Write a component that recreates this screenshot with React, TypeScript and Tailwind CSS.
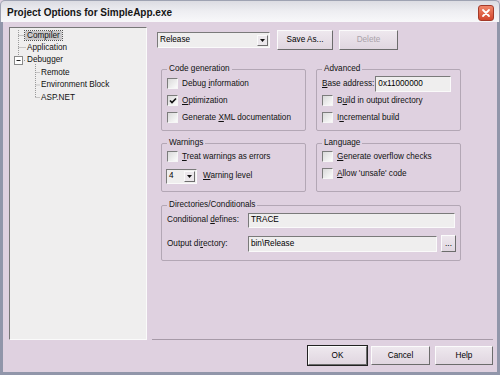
import React from "react";

const Check = ({ checked }: { checked?: boolean }) => (
  <div className="w-[11px] h-[11px] shrink-0 border border-t-[#7c7c7c] border-l-[#7c7c7c] border-r-[#f6f6f6] border-b-[#f6f6f6] bg-linear-to-br from-[#dadada] to-[#fbfbfb] flex items-center justify-center">
    {checked && (
      <svg width="8" height="8" viewBox="0 0 8 8">
        <path d="M1 3.5 L3 5.5 L7 1.5" stroke="#111" strokeWidth="1.6" fill="none" />
      </svg>
    )}
  </div>
);

const CheckRow = ({ checked, children }: { checked?: boolean; children: React.ReactNode }) => (
  <div className="flex items-center h-[17px]">
    <Check checked={checked} />
    <span className="ml-[4px] leading-[10px]">{children}</span>
  </div>
);

const Field = ({ w, h, children }: { w: string; h: string; children?: React.ReactNode }) => (
  <div
    className={`${w} ${h} shrink-0 border border-t-[#7a7a7a] border-l-[#7a7a7a] border-r-[#fafafa] border-b-[#fafafa] bg-[#efeeee] flex items-center pl-[2px] leading-[10px] text-black`}
  >
    {children}
  </div>
);

const DropBtn = () => (
  <div className="ml-auto mr-[1px] w-[11px] h-[11px] bg-[#ebe7eb] border border-t-[#fafafa] border-l-[#fafafa] border-r-[#6e6e6e] border-b-[#6e6e6e] flex items-center justify-center">
    <svg width="5" height="3" viewBox="0 0 5 3">
      <path d="M0 0 H5 L2.5 3 Z" fill="#111" />
    </svg>
  </div>
);

const Btn = ({ children, cls, def, disabled }: { children: React.ReactNode; cls: string; def?: boolean; disabled?: boolean }) => (
  <div
    className={`${cls} shrink-0 flex items-center justify-center bg-linear-to-b from-[#eee8ee] to-[#e0d6e0] leading-[10px] ${
      def ? "outline outline-1 outline-[#222]" : ""
    } border border-t-[#fbfbfb] border-l-[#fbfbfb] border-r-[#6c6c6c] border-b-[#6c6c6c] ${
      disabled ? "text-[#aaa2aa]" : "text-black"
    }`}
  >
    {children}
  </div>
);

const Group = ({ title, cls, children }: { title: string; cls: string; children: React.ReactNode }) => (
  <div className={`${cls} relative border border-[#b3a7b5] rounded-[2px]`}>
    <span className="absolute top-[-6px] left-[5px] px-[2px] bg-[#dfd1e0] leading-[10px]">{title}</span>
    {children}
  </div>
);

export default function App() {
  return (
    <div className="w-[500px] h-[375px] flex flex-col font-['Liberation_Sans',Arial,sans-serif] text-[8.2px] text-[#111] bg-[#dfd1e0]">
      {/* title bar */}
      <div className="h-[22px] shrink-0 flex items-center pl-[6px] pr-[5px] pt-[2px] bg-linear-to-b from-[#dcdce2] via-[#eeeef2] to-[#f8f8fa] border-t border-x border-[#9ea2b2] rounded-t-[5px]">
        <span className="text-[10px] font-bold text-[#151515] leading-[12px]">Project Options for SimpleApp.exe</span>
        <div className="ml-auto w-[16px] h-[16px] rounded-[3px] border border-[#a33a2a] bg-linear-to-b from-[#f0866a] to-[#d2452c] flex items-center justify-center">
          <svg width="10" height="10" viewBox="0 0 10 10">
            <path d="M2 2 L8 8 M8 2 L2 8" stroke="#fff" strokeWidth="1.8" strokeLinecap="round" />
          </svg>
        </div>
      </div>

      {/* body */}
      <div className="flex-1 flex flex-col border-x-[3px] border-b-[3px] border-[#9196aa]">
        <div className="flex pt-[5px] pl-[6px]">
          {/* tree */}
          <div className="relative w-[138px] h-[313px] shrink-0 bg-[#efeeee] border border-t-[#777] border-l-[#777] border-r-[#fafafa] border-b-[#fafafa] pt-[1px]">
            <svg className="absolute left-0 top-0" width="40" height="80" viewBox="0 0 40 80">
              <g stroke="#9a9a9a" strokeWidth="1" strokeDasharray="1 1" fill="none">
                <path d="M8.5 2 V28" />
                <path d="M8.5 7.5 H15" />
                <path d="M8.5 19.5 H16" />
                <path d="M12 32.5 H16" />
                <path d="M25.5 36 V70" />
                <path d="M25.5 44.5 H30" />
                <path d="M25.5 57 H30" />
                <path d="M25.5 69.5 H30" />
              </g>
              <rect x="4.5" y="28.5" width="8" height="8" fill="#fff" stroke="#8a8a8a" />
              <path d="M6.5 32.5 H10.5" stroke="#222" />
            </svg>
            <div className="flex flex-col">
              <div className="h-[12.5px] flex items-center pl-[15px]">
                <span className="px-[2px] leading-[9px] bg-[#c9c7c9] outline outline-1 outline-dotted outline-[#555]">Compiler</span>
              </div>
              <div className="h-[12.5px] flex items-center pl-[17px] leading-[10px]">Application</div>
              <div className="h-[12.5px] flex items-center pl-[17px] leading-[10px]">Debugger</div>
              <div className="h-[12.5px] flex items-center pl-[31px] leading-[10px]">Remote</div>
              <div className="h-[12.5px] flex items-center pl-[31px] leading-[10px]">Environment Block</div>
              <div className="h-[12.5px] flex items-center pl-[31px] leading-[10px]">ASP.NET</div>
            </div>
          </div>

          {/* right pane */}
          <div className="ml-[5px] w-[341px] h-[313px] shrink-0 border-b border-[#a79aa8] flex flex-col">
            <div className="mt-[3px] ml-[5px] h-[20px] flex items-center">
              <Field w="w-[113px]" h="h-[16px]">
                <span>Release</span>
                <DropBtn />
              </Field>
              <Btn cls="ml-[7px] w-[56px] h-[20px]">Save As...</Btn>
              <Btn cls="ml-[6px] w-[59px] h-[20px]" disabled>
                Delete
              </Btn>
            </div>

            <div className="ml-[9px] w-[300px] mt-[19px] flex flex-col">
              <div className="flex gap-[10px] h-[62px]">
                <Group title="Code generation" cls="w-[145px] h-full pt-[5px] pl-[5px]">
                  <CheckRow>
                    Debug <u>i</u>nformation
                  </CheckRow>
                  <CheckRow checked>
                    <u>O</u>ptimization
                  </CheckRow>
                  <CheckRow>
                    Generate <u>X</u>ML documentation
                  </CheckRow>
                </Group>
                <Group title="Advanced" cls="w-[145px] h-full pt-[5px] pl-[5px]">
                  <div className="flex items-center h-[17px]">
                    <span className="leading-[10px]">
                      <u>B</u>ase address:
                    </span>
                    <div className="ml-[1px]">
                      <Field w="w-[76px]" h="h-[16px]">0x11000000</Field>
                    </div>
                  </div>
                  <CheckRow>
                    B<u>u</u>ild in output directory
                  </CheckRow>
                  <CheckRow>
                    I<u>n</u>cremental build
                  </CheckRow>
                </Group>
              </div>

              <div className="flex gap-[10px] h-[49px] mt-[12px]">
                <Group title="Warnings" cls="w-[145px] h-full pt-[4px] pl-[5px]">
                  <CheckRow>
                    <u>T</u>reat warnings as errors
                  </CheckRow>
                  <div className="flex items-center h-[16px] mt-[3px] -ml-[1px]">
                    <Field w="w-[31px]" h="h-[15px]">
                      <span>4</span>
                      <DropBtn />
                    </Field>
                    <span className="ml-[6px] leading-[10px]">
                      <u>W</u>arning level
                    </span>
                  </div>
                </Group>
                <Group title="Language" cls="w-[145px] h-full pt-[4px] pl-[5px]">
                  <CheckRow>
                    <u>G</u>enerate overflow checks
                  </CheckRow>
                  <CheckRow>
                    <u>A</u>llow 'unsafe' code
                  </CheckRow>
                </Group>
              </div>

              <div className="h-[56px] mt-[13px] flex">
                <Group title="Directories/Conditionals" cls="w-[300px] h-full pt-[6px] pl-[5px]">
                  <div className="flex items-center h-[16px]">
                    <span className="w-[81px] leading-[10px]">
                      Conditional <u>d</u>efines:
                    </span>
                    <Field w="w-[207px]" h="h-[15px]">TRACE</Field>
                  </div>
                  <div className="flex items-center h-[17px] mt-[7px]">
                    <span className="w-[81px] leading-[10px]">
                      Output di<u>r</u>ectory:
                    </span>
                    <Field w="w-[189px]" h="h-[16px]">bin\Release</Field>
                    <Btn cls="ml-[4px] w-[15px] h-[17px]">...</Btn>
                  </div>
                </Group>
              </div>
            </div>
          </div>
        </div>

        {/* bottom buttons */}
        <div className="mt-[6px] flex justify-end pr-[4px]">
          <Btn cls="w-[59px] h-[19px]" def>
            OK
          </Btn>
          <Btn cls="ml-[4px] w-[59px] h-[19px]">Cancel</Btn>
          <Btn cls="ml-[5px] w-[58px] h-[19px]">Help</Btn>
        </div>
      </div>
    </div>
  );
}
